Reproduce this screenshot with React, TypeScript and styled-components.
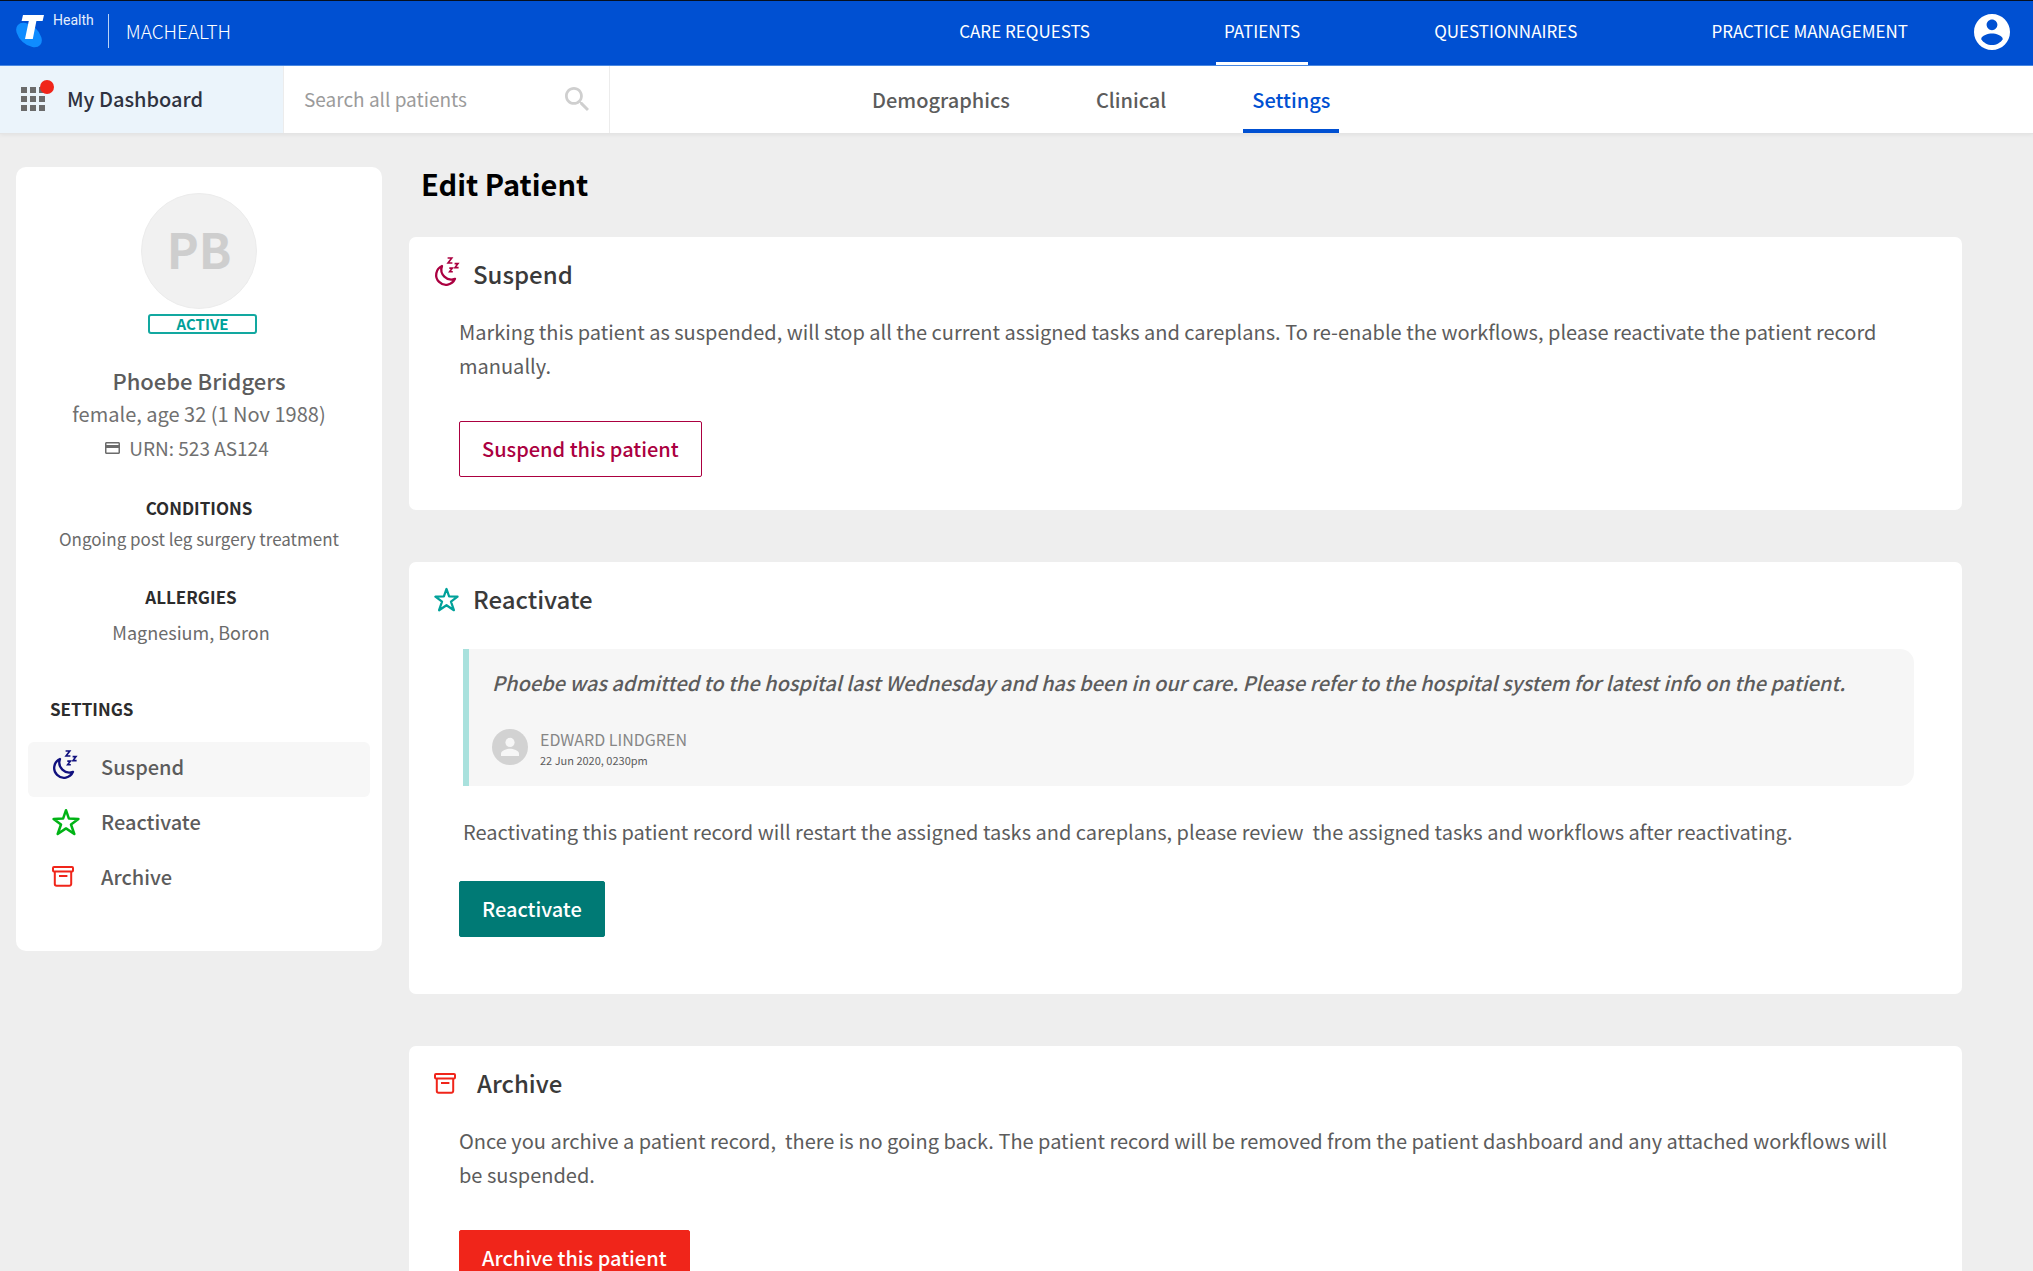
import React from "react";
import styled, { createGlobalStyle } from "styled-components";

const GlobalStyle = createGlobalStyle`
  *, *::before, *::after { box-sizing: border-box; }
  body {
    margin: 0;
    background: #eeeeee;
    color: #5c5c5c;
    font-family: "Source Sans Pro", "Noto Sans CJK SC", "Noto Sans", sans-serif;
    font-size: 20px;
    line-height: 34px;
  }
  h1, h2, h3, p, ul, blockquote { margin: 0; padding: 0; }
  ul { list-style: none; }
  a { color: inherit; text-decoration: none; }
  button, input { font: inherit; }
  svg { display: block; flex: none; }
`;

/* ---------- icons ---------- */

const TelstraMark = () => (
  <svg width="30" height="34" viewBox="0 0 30 34" aria-hidden="true">
    <ellipse cx="14" cy="21" rx="15" ry="9.4" transform="rotate(42 14 21)" fill="#0f8cff" />
    <polygon fill="#fff" points="8,1 29,1 27.6,7 21.4,7 17.8,25 10,25 13.8,7 6.6,7" />
  </svg>
);

const AccountIcon = () => (
  <svg width="36" height="36" viewBox="2 2 20 20" fill="#fff" aria-hidden="true">
    <path d="M12 2C6.48 2 2 6.48 2 12s4.48 10 10 10 10-4.48 10-10S17.52 2 12 2zm0 3c1.66 0 3 1.34 3 3s-1.34 3-3 3-3-1.34-3-3 1.34-3 3-3zm0 14.2c-2.5 0-4.71-1.28-6-3.22.03-1.99 4-3.08 6-3.08 1.99 0 5.97 1.09 6 3.08-1.29 1.94-3.5 3.22-6 3.22z" />
  </svg>
);

const AppsIcon = () => (
  <svg width="24" height="24" viewBox="4 4 16 16" fill="#6b6b6b" aria-hidden="true">
    <path d="M4 8h4V4H4v4zm6 12h4v-4h-4v4zm-6 0h4v-4H4v4zm0-6h4v-4H4v4zm6 0h4v-4h-4v4zm6-10v4h4V4h-4zm-6 4h4V4h-4v4zm6 6h4v-4h-4v4zm0 6h4v-4h-4v4z" />
  </svg>
);

const SearchIcon = () => (
  <svg width="24" height="24" viewBox="3 3 17.5 17.5" fill="#cfcfcf" aria-hidden="true">
    <path d="M15.5 14h-.79l-.28-.27C15.41 12.59 16 11.11 16 9.5 16 5.91 13.09 3 9.5 3S3 5.91 3 9.5 5.91 16 9.5 16c1.61 0 3.09-.59 4.23-1.57l.27.28v.79l5 4.99L20.49 19l-4.99-5zm-6 0C7.01 14 5 11.99 5 9.5S7.01 5 9.5 5 14 7.01 14 9.5 11.99 14 9.5 14z" />
  </svg>
);

const CardIcon = () => (
  <svg width="15" height="12" viewBox="2 4 20 16" fill="#6b6b6b" aria-hidden="true">
    <path d="M20 4H4c-1.11 0-1.99.89-1.99 2L2 18c0 1.11.89 2 2 2h16c1.11 0 2-.89 2-2V6c0-1.11-.89-2-2-2zm0 14H4v-6h16v6zm0-10H4V6h16v2z" />
  </svg>
);

type IconProps = { color: string; size?: number };

const SleepIcon = ({ color }: IconProps) => (
  <svg width="26" height="34" viewBox="0 0 26 34" fill="none" stroke={color} aria-hidden="true">
    <path
      d="M8 9A9.8 9.8 0 1 0 21 21.8A10 10 0 0 1 8 9Z"
      strokeWidth="2.3"
      strokeLinejoin="round"
    />
    <g strokeWidth="1.6">
      <polyline points="13.6,1 17.8,1 14,6 18.4,6" />
      <polyline points="20.6,6.6 24,6.6 21,10.6 24.6,10.6" />
      <polyline points="15.3,11.1 18.4,11.1 15.6,14.8 18.8,14.8" />
    </g>
  </svg>
);

const StarIcon = ({ color, size = 25 }: IconProps) => (
  <svg width={size} height={size} viewBox="0 0 28 28" fill="none" stroke={color} aria-hidden="true">
    <polygon
      points="14,2.2 16.9,10.6 26.4,10.9 19,16.5 22.3,26 14,20.4 5.7,26 9,16.5 1.6,10.9 11.1,10.6"
      strokeWidth="2.5"
      strokeLinejoin="round"
    />
  </svg>
);

const ArchiveIcon = ({ color }: IconProps) => (
  <svg width="22" height="21" viewBox="0 0 22 21" fill="none" stroke={color} strokeWidth="2" aria-hidden="true">
    <rect x="1" y="1" width="20" height="4.4" rx="1" />
    <path d="M2.8 5.6V18a1.8 1.8 0 0 0 1.8 1.8h12.8a1.8 1.8 0 0 0 1.8-1.8V5.6" />
    <path d="M7 10h8.4" />
  </svg>
);

const PersonIcon = () => (
  <svg width="36" height="36" viewBox="0 0 36 36" aria-hidden="true">
    <circle cx="18" cy="18" r="18" fill="#d2d2d2" />
    <circle cx="18" cy="13.4" r="4.6" fill="#f6f6f6" />
    <path d="M9 27v-2.4c0-3.1 6-4.8 9-4.8s9 1.7 9 4.8V27z" fill="#f6f6f6" />
  </svg>
);

/* ---------- top bar ---------- */

const TopBar = styled.header`
  display: flex;
  align-items: stretch;
  height: 66px;
  padding: 0 23px 0 15px;
  background: #0050d2;
  border-top: 1px solid #06101f;
  border-bottom: 1px solid #4a8ae4;
  color: #fff;
`;

const Brand = styled.a`
  display: flex;
  align-items: flex-start;
  padding-top: 13px;
`;

const BrandUnit = styled.span`
  margin-left: 8px;
  padding-right: 14px;
  font-family: Roboto, sans-serif;
  font-size: 14px;
  line-height: 12px;
  color: #e4eefc;
`;

const BrandName = styled.span`
  padding-left: 17px;
  border-left: 1px solid #b9d2f6;
  font-size: 19px;
  font-weight: 300;
  line-height: 34px;
`;

const MainNav = styled.nav`
  display: flex;
  gap: 118px;
  margin-left: auto;
  margin-right: 58px;
`;

const NavLink = styled.a<{ $active?: boolean }>`
  display: flex;
  align-items: center;
  padding: 0 8px 2px;
  font-size: 17px;
  line-height: 24px;
  border-bottom: 3px solid ${(p) => (p.$active ? "#fff" : "transparent")};
`;

const AccountButton = styled.button`
  align-self: center;
  padding: 0 0 2px;
  border: 0;
  background: none;
  cursor: pointer;
`;

/* ---------- second bar ---------- */

const SubBar = styled.div`
  display: flex;
  height: 68px;
  background: #fff;
  border-bottom: 1px solid #e4e4e4;
  box-shadow: 0 1px 4px rgba(0, 0, 0, 0.06);
`;

const DashboardLink = styled.a`
  display: flex;
  align-items: center;
  gap: 22px;
  width: 283px;
  padding: 0 0 2px 21px;
  background: #ebf4fb;
  color: #2f3240;
  font-weight: 500;
`;

const AppsBadge = styled.span`
  position: relative;
  &::after {
    content: "";
    position: absolute;
    top: -7px;
    right: -9px;
    width: 14px;
    height: 14px;
    border-radius: 50%;
    background: #f0251a;
  }
`;

const SearchBox = styled.label`
  display: flex;
  align-items: center;
  width: 327px;
  padding: 0 20px 2px;
  border-left: 1px solid #ececec;
  border-right: 1px solid #ececec;
`;

const SearchInput = styled.input`
  flex: 1;
  min-width: 0;
  padding: 0;
  border: 0;
  outline: 0;
  background: none;
  color: #5c5c5c;
  font-size: 19px;
  &::placeholder { color: #9b9b9b; opacity: 1; }
`;

const Tabs = styled.nav`
  display: flex;
  gap: 68px;
  margin-left: 253px;
`;

const Tab = styled.a<{ $active?: boolean }>`
  display: flex;
  align-items: center;
  padding: 0 9px;
  font-weight: 500;
  border-top: 4px solid transparent;
  border-bottom: 4px solid ${(p) => (p.$active ? "#0050d2" : "transparent")};
  color: ${(p) => (p.$active ? "#0050d2" : "#5c5c5c")};
`;

/* ---------- page ---------- */

const Page = styled.div`
  display: grid;
  grid-template-columns: 366px minmax(0, 1fr);
  gap: 27px;
  align-items: start;
  padding: 33px 71px 52px 16px;
`;

const Sidebar = styled.aside`
  display: flex;
  flex-direction: column;
  padding: 26px 12px 44px;
  border-radius: 10px;
  background: #fff;
`;

const Identity = styled.div`
  display: flex;
  flex-direction: column;
  align-items: flex-end;
  gap: 5px;
  align-self: center;
`;

const Avatar = styled.div`
  display: grid;
  place-items: center;
  width: 116px;
  height: 116px;
  padding-bottom: 6px;
  border: 1px solid #ececec;
  border-radius: 50%;
  background: #f1f1f1;
  color: #cecece;
  font-size: 48px;
  font-weight: 700;
  line-height: 60px;
`;

const StatusBadge = styled.span`
  width: 109px;
  border: 2px solid #12a8a0;
  border-radius: 3px;
  color: #00a19a;
  font-size: 15px;
  font-weight: 700;
  line-height: 16px;
  text-align: center;
`;

const PatientName = styled.h2`
  margin-top: 29px;
  font-size: 22px;
  font-weight: 500;
  text-align: center;
`;

const PatientLine = styled.p`
  display: flex;
  align-items: center;
  justify-content: center;
  gap: 9px;
  color: #707070;
`;

const UrnLine = styled(PatientLine)`
  padding-right: 24px;
  font-size: 19px;
`;

const Fact = styled.section<{ $inset?: number; $gap?: number }>`
  display: flex;
  flex-direction: column;
  gap: ${(p) => p.$gap ?? 0}px;
  margin-top: 27px;
  padding-right: ${(p) => p.$inset ?? 0}px;
  text-align: center;
`;

const Label = styled.h3`
  font-size: 17px;
  font-weight: 700;
  line-height: 31px;
  color: #2c2c2c;
`;

const FactText = styled.p<{ $size: number }>`
  font-size: ${(p) => p.$size}px;
  line-height: 31px;
  color: #6b6b6b;
`;

const SettingsNav = styled.nav`
  margin-top: 45px;
`;

const SettingsLabel = styled(Label)`
  padding-left: 22px;
  margin-bottom: 18px;
`;

const SettingsLink = styled.a<{ $active?: boolean }>`
  display: flex;
  align-items: center;
  height: 55px;
  padding: 0 24px 6px;
  border-radius: 6px;
  background: ${(p) => (p.$active ? "#f7f7f7" : "transparent")};
  font-weight: 500;
`;

const IconSlot = styled.span<{ $width: number }>`
  flex: none;
  width: ${(p) => p.$width}px;
`;

const Main = styled.main`
  display: flex;
  flex-direction: column;
  gap: 52px;
`;

const PageTitle = styled.h1`
  padding-left: 12px;
  margin-bottom: -14px;
  font-size: 29px;
  font-weight: 700;
  line-height: 32px;
  color: #000;
`;

const Card = styled.section<{ $bottom?: number }>`
  padding: 20px 48px ${(p) => p.$bottom ?? 33}px 25px;
  border-radius: 7px;
  background: #fff;
`;

const CardTitle = styled.h2`
  display: flex;
  align-items: center;
  font-size: 24px;
  font-weight: 500;
  line-height: 34px;
  color: #3a3a3a;
`;

const CardBody = styled.div`
  display: flex;
  flex-direction: column;
  align-items: flex-start;
  gap: 38px;
  padding: 24px 0 0 25px;
`;

const CardText = styled.p`
  white-space: pre-wrap;
`;

const NoteBody = styled(CardBody)`
  gap: 32px;
  padding-top: 33px;
`;

const NoteGroup = styled.div`
  display: flex;
  flex-direction: column;
  gap: 29px;
  width: 100%;
  padding-left: 4px;
`;

const Note = styled.blockquote`
  display: flex;
  flex-direction: column;
  gap: 29px;
  padding: 17px 24px 15px 23px;
  border-left: 6px solid #a9e1dd;
  border-radius: 0 14px 14px 0;
  background: #f6f6f6;
`;

const NoteText = styled.p`
  font-style: italic;
  font-weight: 500;
`;

const NoteAuthor = styled.footer`
  display: flex;
  align-items: flex-start;
  gap: 12px;
`;

const AuthorName = styled.div`
  font-size: 16px;
  line-height: 20px;
  color: #868686;
`;

const NoteDate = styled.time`
  display: block;
  font-size: 11px;
  line-height: 22px;
`;

const ActionButton = styled.button<{ $fill: string; $ink: string; $edge: string }>`
  height: 56px;
  padding: 0 22px;
  border: 1px solid ${(p) => p.$edge};
  border-radius: 2px;
  background: ${(p) => p.$fill};
  color: ${(p) => p.$ink};
  font-weight: 500;
  cursor: pointer;
`;

const navItems = ["CARE REQUESTS", "PATIENTS", "QUESTIONNAIRES", "PRACTICE MANAGEMENT"];
const tabItems = ["Demographics", "Clinical", "Settings"];

const settingsItems = [
  { name: "Suspend", icon: <SleepIcon color="#10107e" /> },
  { name: "Reactivate", icon: <StarIcon color="#00b315" size={28} /> },
  { name: "Archive", icon: <ArchiveIcon color="#f0251a" /> },
];

export default function App() {
  return (
    <>
      <GlobalStyle />
      <TopBar>
        <Brand href="#home">
          <TelstraMark />
          <BrandUnit>Health</BrandUnit>
          <BrandName>MACHEALTH</BrandName>
        </Brand>
        <MainNav aria-label="Main">
          {navItems.map((item) => (
            <NavLink key={item} href="#nav" $active={item === "PATIENTS"}>
              {item}
            </NavLink>
          ))}
        </MainNav>
        <AccountButton type="button" aria-label="Account">
          <AccountIcon />
        </AccountButton>
      </TopBar>

      <SubBar>
        <DashboardLink href="#dashboard">
          <AppsBadge>
            <AppsIcon />
          </AppsBadge>
          My Dashboard
        </DashboardLink>
        <SearchBox>
          <SearchInput type="text" placeholder="Search all patients" aria-label="Search all patients" />
          <SearchIcon />
        </SearchBox>
        <Tabs aria-label="Patient">
          {tabItems.map((item) => (
            <Tab key={item} href="#tab" $active={item === "Settings"}>
              {item}
            </Tab>
          ))}
        </Tabs>
      </SubBar>

      <Page>
        <Sidebar>
          <Identity>
            <Avatar>PB</Avatar>
            <StatusBadge>ACTIVE</StatusBadge>
          </Identity>
          <PatientName>Phoebe Bridgers</PatientName>
          <PatientLine>female, age 32 (1 Nov 1988)</PatientLine>
          <UrnLine>
            <CardIcon />
            URN: 523 AS124
          </UrnLine>
          <Fact>
            <Label>CONDITIONS</Label>
            <FactText $size={17}>Ongoing post leg surgery treatment</FactText>
          </Fact>
          <Fact $inset={16} $gap={5}>
            <Label>ALLERGIES</Label>
            <FactText $size={18}>Magnesium, Boron</FactText>
          </Fact>
          <SettingsNav aria-label="Settings">
            <SettingsLabel>SETTINGS</SettingsLabel>
            <ul>
              {settingsItems.map((item) => (
                <li key={item.name}>
                  <SettingsLink href="#settings" $active={item.name === "Suspend"}>
                    <IconSlot $width={49}>{item.icon}</IconSlot>
                    {item.name}
                  </SettingsLink>
                </li>
              ))}
            </ul>
          </SettingsNav>
        </Sidebar>

        <Main>
          <PageTitle>Edit Patient</PageTitle>

          <Card>
            <CardTitle>
              <IconSlot $width={39}>
                <SleepIcon color="#ab0040" />
              </IconSlot>
              Suspend
            </CardTitle>
            <CardBody>
              <CardText>
                Marking this patient as suspended, will stop all the current assigned tasks and careplans. To re-enable the workflows, please reactivate the patient record manually.
              </CardText>
              <ActionButton type="button" $fill="#fff" $ink="#ab0040" $edge="#ab0040">
                Suspend this patient
              </ActionButton>
            </CardBody>
          </Card>

          <Card $bottom={57}>
            <CardTitle>
              <IconSlot $width={39}>
                <StarIcon color="#00a19a" />
              </IconSlot>
              Reactivate
            </CardTitle>
            <NoteBody>
              <NoteGroup>
                <Note>
                  <NoteText>
                    Phoebe was admitted to the hospital last Wednesday and has been in our care. Please refer to the hospital system for latest info on the patient.
                  </NoteText>
                  <NoteAuthor>
                    <PersonIcon />
                    <div>
                      <AuthorName>EDWARD LINDGREN</AuthorName>
                      <NoteDate>22 Jun 2020, 0230pm</NoteDate>
                    </div>
                  </NoteAuthor>
                </Note>
                <CardText>
                  {"Reactivating this patient record will restart the assigned tasks and careplans, please review  the assigned tasks and workflows after reactivating."}
                </CardText>
              </NoteGroup>
              <ActionButton type="button" $fill="#007a75" $ink="#fff" $edge="#007a75">
                Reactivate
              </ActionButton>
            </NoteBody>
          </Card>

          <Card>
            <CardTitle>
              <IconSlot $width={43}>
                <ArchiveIcon color="#f0251a" />
              </IconSlot>
              Archive
            </CardTitle>
            <CardBody>
              <CardText>
                {"Once you archive a patient record,  there is no going back. The patient record will be removed from the patient dashboard and any attached workflows will be suspended."}
              </CardText>
              <ActionButton type="button" $fill="#f0251a" $ink="#fff" $edge="#f0251a">
                Archive this patient
              </ActionButton>
            </CardBody>
          </Card>
        </Main>
      </Page>
    </>
  );
}
